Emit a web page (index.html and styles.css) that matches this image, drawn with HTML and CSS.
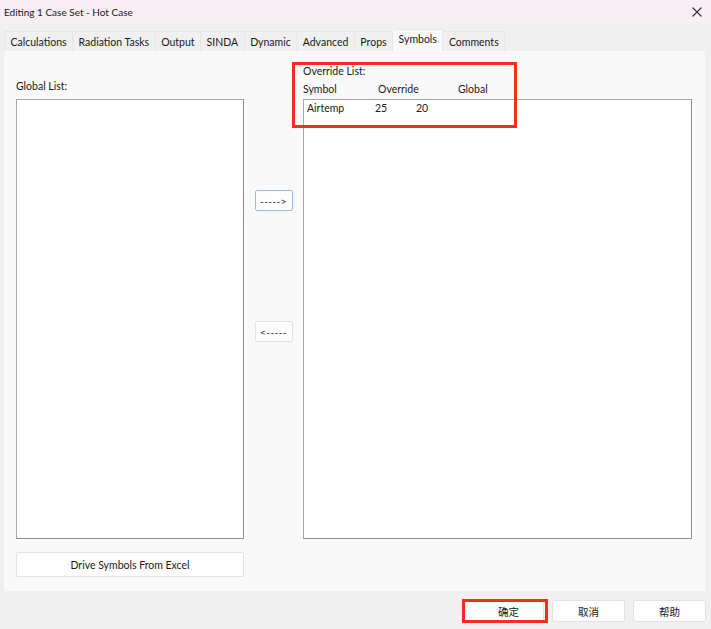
FILE: index.html
```html
<!DOCTYPE html>
<html>
<head>
    <link rel="stylesheet" href="styles.css">
</head>
<body>
    <div class="window">
        <div class="titlebar">
            <span class="title">Editing 1 Case Set - Hot Case</span>
            <svg class="close" width="10" height="10" viewBox="0 0 10 10">
                <path d="M0.5 0.5 L9.5 9.5 M9.5 0.5 L0.5 9.5" stroke="#333" stroke-width="1.1" fill="none"/>
            </svg>
        </div>

        <div class="tabs">
            <div class="tab">Calculations</div>
            <div class="tab">Radiation Tasks</div>
            <div class="tab">Output</div>
            <div class="tab">SINDA</div>
            <div class="tab">Dynamic</div>
            <div class="tab">Advanced</div>
            <div class="tab">Props</div>
            <div class="tab active">Symbols</div>
            <div class="tab">Comments</div>
        </div>

        <div class="panel">
            <div class="head head-left">
                <span>Global List:</span>
            </div>
            <div class="head-gap"></div>
            <div class="head head-right">
                <span>Override List:</span>
                <div class="columns">
                    <span class="col-symbol">Symbol</span>
                    <span class="col-override">Override</span>
                    <span class="col-global">Global</span>
                </div>
            </div>

            <div class="listbox"></div>
            <div class="movers">
                <button class="btn small focused">-----&gt;</button>
                <button class="btn small">&lt;-----</button>
            </div>
            <div class="listbox">
                <div class="row">
                    <span class="cell-symbol">Airtemp</span>
                    <span class="cell-override">25</span>
                    <span class="cell-global">20</span>
                </div>
            </div>

            <button class="btn wide">Drive Symbols From Excel</button>
        </div>

        <div class="footer">
            <button class="btn dialog">确定</button>
            <button class="btn dialog">取消</button>
            <button class="btn dialog">帮助</button>
        </div>

        <!-- annotation boxes -->
        <div class="mark mark-list"></div>
        <div class="mark mark-ok"></div>
    </div>
</body>
</html>
```

FILE: styles.css
```css
body {
    margin: 0;
    padding: 0;
    background: #f0f0f0;
    font-family: 'Lato', 'Noto Sans CJK SC', sans-serif;
    font-size: 10.5px;
    color: #1a1a1a;
}

.window {
    position: relative;
    width: 711px;
    height: 629px;
    overflow: hidden;
}

.titlebar {
    height: 23px;
    background: #f8eef3;
    display: flex;
    align-items: center;
    justify-content: space-between;
    padding: 0 9px 0 4px;
}

.title {
    font-size: 10px;
}

.tabs {
    display: flex;
    align-items: flex-end;
    height: 22px;
    margin-top: 6px;
    padding-left: 4px;
}

.tab {
    height: 18px;
    line-height: 18px;
    padding: 1px 5.5px 0;
    background: #f0f0f0;
    border-top: 1px solid #e6e6e6;
    border-right: 1px solid #e6e6e6;
    white-space: nowrap;
}

.tab:first-child {
    border-left: 1px solid #e6e6e6;
}

.tab.active {
    height: 21px;
    padding-top: 0;
    line-height: 18px;
    background: #f9f9f9;
}

.panel {
    width: 701px;
    height: 540px;
    margin-left: 4px;
    background: #f9f9f9;
    box-sizing: border-box;
    padding: 0 13px 0 12px;
    display: grid;
    grid-template-columns: 228px 59px 389px;
    grid-template-rows: 48px 440px 38px;
    align-content: start;
}

.head {
    display: flex;
    flex-direction: column;
    justify-content: flex-end;
    line-height: 18px;
}

.head-left {
    padding-bottom: 4px;
}

.head-right {
    padding-bottom: 1px;
}

.columns {
    display: flex;
}

.col-symbol {
    width: 75px;
}

.col-override {
    width: 80px;
}

.listbox {
    background: #fff;
    border: 1px solid #a9a9a9;
    border-right-color: #8e8e8e;
    border-bottom-color: #8e8e8e;
}

.row {
    display: flex;
    padding: 1px 3px;
    line-height: 14px;
}

.cell-symbol {
    width: 68px;
}

.cell-override {
    width: 41px;
}

.movers {
    display: flex;
    flex-direction: column;
    align-items: center;
    padding-top: 91px;
    gap: 110px;
}

.btn {
    font-family: inherit;
    font-size: 10.5px;
    color: #1a1a1a;
    background: #fdfdfd;
    border: 1px solid #e2e2e2;
    border-radius: 2px;
    padding: 0;
    cursor: pointer;
}

.btn.small {
    width: 38px;
    height: 21px;
    font-size: 10px;
    letter-spacing: 0.4px;
}

.btn.focused {
    border-color: #8fc0ea;
}

.btn.wide {
    align-self: end;
    width: 228px;
    height: 25px;
}

.footer {
    display: flex;
    justify-content: flex-end;
    gap: 8px;
    padding: 9px 5px 0 0;
}

.btn.dialog {
    width: 73px;
    height: 22px;
    font-family: 'Noto Sans CJK SC', sans-serif;
}

.btn.dialog:first-child {
    width: 82px;
    padding-left: 8px;
    border-left: 4px solid #ececec;
}

.mark {
    position: absolute;
    border: 3px solid #f52d1c;
}

.mark-list {
    left: 292px;
    top: 62px;
    width: 219px;
    height: 60px;
}

.mark-ok {
    left: 462px;
    top: 599px;
    width: 80px;
    height: 18px;
}
```
